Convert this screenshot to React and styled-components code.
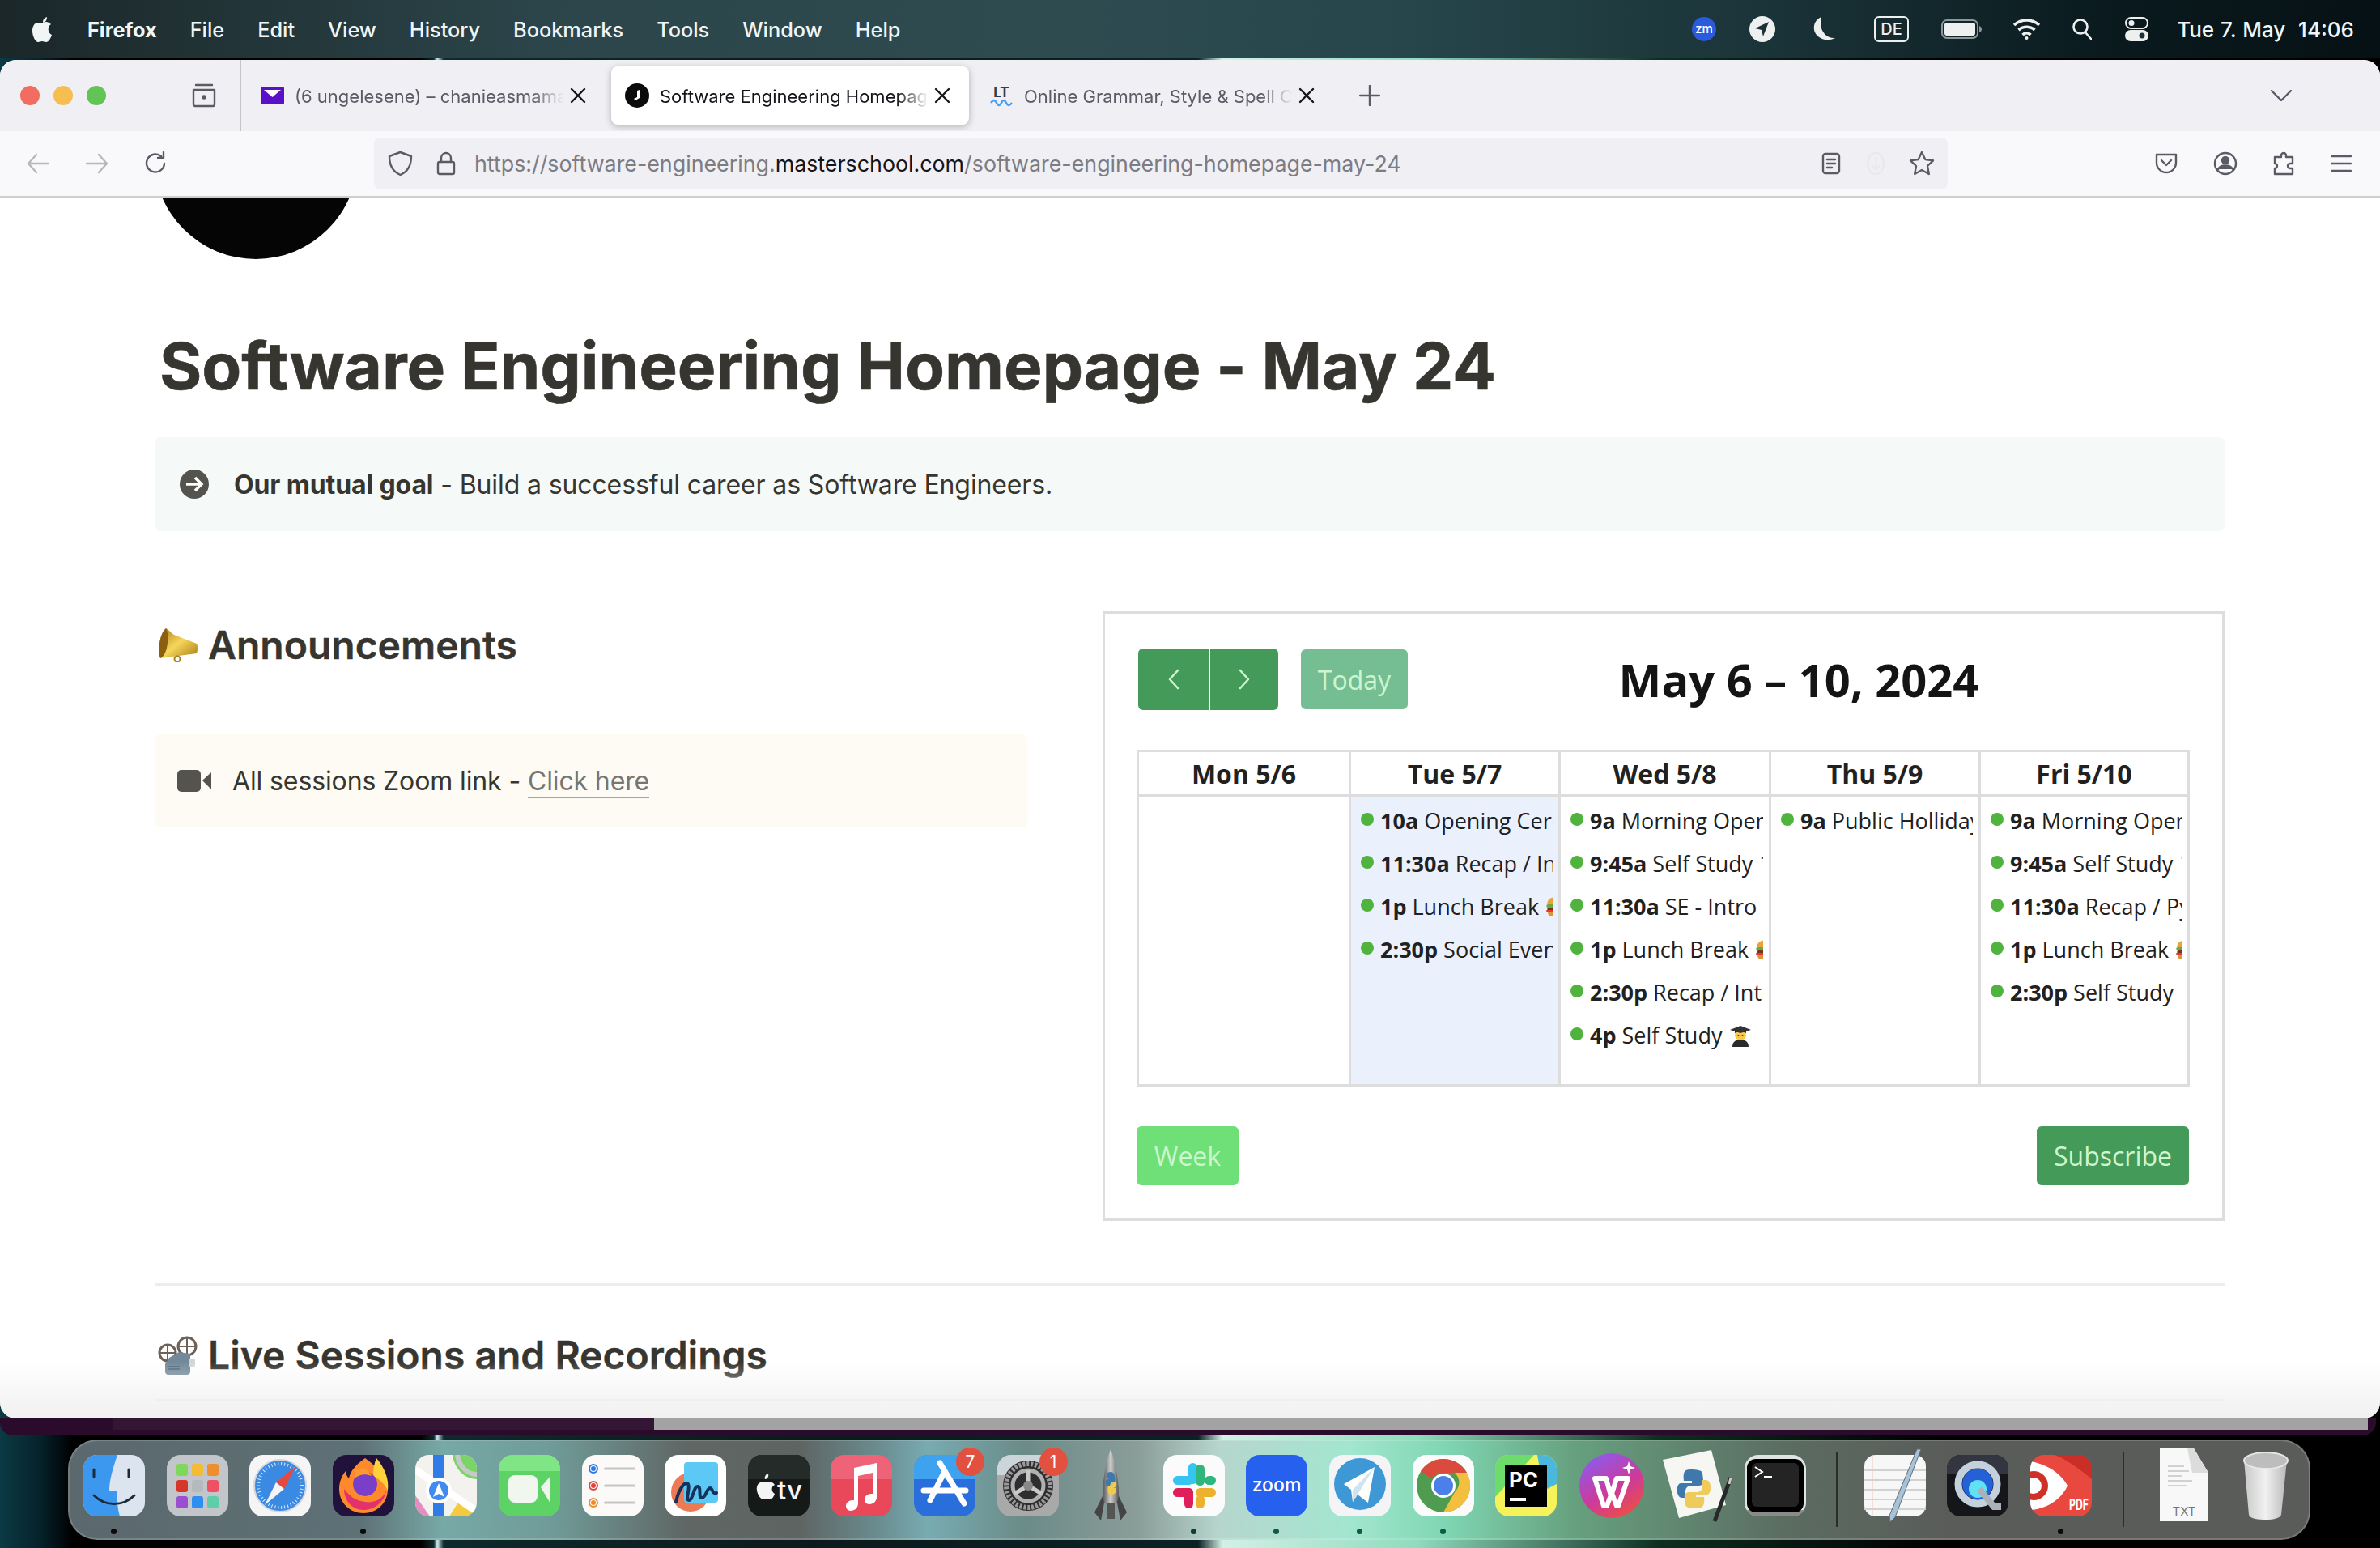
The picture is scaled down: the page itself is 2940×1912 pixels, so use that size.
import React from 'react';
import styled, { createGlobalStyle } from 'styled-components';

const GlobalStyle = createGlobalStyle`
  html, body { margin: 0; padding: 0; background: #000; }
  * { box-sizing: border-box; }
`;

const Desktop = styled.div`
  width: 2940px;
  height: 1912px;
  overflow: hidden;
  display: flex;
  flex-direction: column;
  font-family: Inter, "Liberation Sans", sans-serif;
  background: linear-gradient(90deg, #0b3a44 0, #06222a 50px, #000 90px, #000 520px, #0d2a2c 536px, #cfeef0 540px, #0d2a2c 548px, #0c1a1c 1000px, #0a2226 1480px, #d2f0e6 1510px, #8fdcbe 1750px, #0c2e20 2050px, #000 2400px);
`;

const MenuBar = styled.header`
  height: 72px;
  flex: none;
  display: flex;
  align-items: center;
  padding: 0 32px 0 40px;
  color: #f2f5f5;
  font-size: 25.3px;
  background: linear-gradient(90deg, #1b2729 0, #2c464b 700px, #2e4b50 1300px, #27474c 1700px, #1a3338 2200px, #0a1a1e 2600px, #061115 2940px);
`;

const MenuItem = styled.span`
  margin-left: ${p => p.$ml || 41}px;
  font-weight: ${p => (p.$strong ? 700 : 500)};
  white-space: nowrap;
`;

const StatusGroup = styled.div`
  margin-left: auto;
  display: flex;
  align-items: center;
`;

const StatusIcon = styled.svg`
  flex: none;
  margin-left: ${p => p.$ml}px;
`;

const Clock = styled.span`
  margin-left: 35px;
  font-size: 26px;
  font-weight: 500;
  white-space: pre;
  word-spacing: 1px;
`;

const BrowserWindow = styled.main`
  position: relative;
  margin-top: 2px;
  height: 1678px;
  flex: none;
  display: flex;
  flex-direction: column;
  background: #fff;
  border-radius: 20px;
  overflow: hidden;
  &::after {
    content: '';
    position: absolute;
    left: 0;
    right: 0;
    bottom: 0;
    height: 70px;
    background: linear-gradient(180deg, rgba(240,240,240,0), #f0f0f0);
    pointer-events: none;
  }
`;

const TabBar = styled.div`
  height: 88px;
  flex: none;
  display: flex;
  align-items: center;
  padding-left: 25px;
  background: #f0eff4;
`;

const Lights = styled.div`
  display: flex;
  gap: 17px;
`;

const Light = styled.span`
  width: 24px;
  height: 24px;
  border-radius: 50%;
  background: ${p => p.$color};
`;

const SideDivider = styled.div`
  width: 2px;
  height: 88px;
  margin: 0 7px 0 28px;
  background: #c4c3c9;
`;

const Tab = styled.div`
  width: 442px;
  height: 72px;
  margin-right: 8px;
  padding: 0 22px 0 17px;
  display: flex;
  align-items: center;
  border-radius: 8px;
  font-size: 22px;
  color: ${p => (p.$active ? '#15141a' : '#5b5b66')};
  background: ${p => (p.$active ? '#fff' : 'transparent')};
  box-shadow: ${p => (p.$active ? '0 2px 8px rgba(0,0,0,0.28)' : 'none')};
`;

const TabLabel = styled.span`
  flex: 1;
  min-width: 0;
  margin: 2px 6px 0 13px;
  overflow: hidden;
  white-space: nowrap;
  -webkit-mask-image: linear-gradient(90deg, #000 88%, transparent);
  mask-image: linear-gradient(90deg, #000 88%, transparent);
`;

const Toolbar = styled.div`
  height: 82px;
  flex: none;
  display: flex;
  align-items: center;
  padding: 0 34px 0 33px;
  background: #f9f9fb;
  border-bottom: 2px solid #cfcfd1;
`;

const UrlBar = styled.div`
  width: 1944px;
  height: 64px;
  margin: 0 256px 0 254px;
  padding: 0 16px;
  flex: none;
  display: flex;
  align-items: center;
  border-radius: 8px;
  background: #f0eff3;
`;

const UrlText = styled.span`
  margin-left: 23px;
  font-size: 26.8px;
  color: #7c7c85;
  white-space: nowrap;
  b { font-weight: 400; color: #15141a; }
`;

const ToolIcon = styled.svg`
  flex: none;
  margin-left: ${p => p.$ml || 0}px;
  margin-right: ${p => p.$mr || 0}px;
  fill: none;
  stroke: ${p => p.$color || '#5b5b66'};
  stroke-width: 2.4;
  stroke-linecap: round;
  stroke-linejoin: round;
`;

const ReaderIcon = styled(ToolIcon)`
  margin-left: auto;
`;

const PageScroll = styled.div`
  flex: 1;
  min-height: 0;
  overflow: hidden;
  padding: 0 192px;
  color: #37352f;
`;

const Avatar = styled.div`
  width: 252px;
  height: 252px;
  margin: -176px 0 0 -2px;
  border-radius: 50%;
  background: #050505;
`;

const PageTitle = styled.h1`
  margin: 84px 0 0 5px;
  font-size: 80px;
  line-height: 96px;
  font-weight: 700;
  letter-spacing: -0.05px;
  -webkit-text-stroke: 0.6px #37352f;
`;

const Callout = styled.div`
  height: ${p => p.$h}px;
  display: flex;
  align-items: center;
  gap: ${p => p.$gap}px;
  padding-left: ${p => p.$pad}px;
  border-radius: 6px;
  background: ${p => p.$bg};
  font-size: 32px;
  letter-spacing: -0.12px;
`;

const GoalCallout = styled(Callout)`
  margin-top: 40px;
`;

const ZoomLink = styled.a`
  color: #787671;
  border-bottom: 2px solid #a5a3a0;
  line-height: 38px;
`;

const Columns = styled.section`
  display: grid;
  grid-template-columns: 1077px 1386px;
  column-gap: 93px;
  margin-top: 101px;
`;

const SectionTitle = styled.h2`
  margin: 0;
  display: flex;
  align-items: center;
  gap: 12px;
  font-size: 48px;
  line-height: 58px;
  font-weight: 600;
  padding-left: 3px;
  -webkit-text-stroke: 0.4px #37352f;
`;

const AnnounceTitle = styled(SectionTitle)`
  margin-top: 11px;
`;

const ZoomCallout = styled(Callout)`
  margin-top: 81px;
`;

const CalendarCard = styled.div`
  height: 753px;
  margin-top: -2px;
  padding: 43px 40px 38px 39px;
  border: 3px solid #dddddd;
  font-family: "Open Sans", sans-serif;
  color: #212121;
`;

const CalToolbar = styled.div`
  height: 76px;
  padding-left: 2px;
  display: flex;
  align-items: center;
  justify-content: space-between;
`;

const ToolbarLeft = styled.div`
  display: flex;
  align-items: center;
  gap: 28px;
`;

const NavGroup = styled.div`
  display: flex;
  height: 76px;
  border-radius: 6px;
  overflow: hidden;
`;

const NavButton = styled.div`
  width: ${p => p.$w}px;
  display: flex;
  align-items: center;
  justify-content: center;
  background: #449a58;
  border-left: ${p => (p.$split ? '2px solid #fff' : '0')};
`;

const CalButton = styled.div`
  width: ${p => p.$w}px;
  height: ${p => p.$h}px;
  display: flex;
  align-items: center;
  justify-content: center;
  border-radius: 6px;
  background: ${p => p.$bg};
  color: #cdf6ce;
  font-size: 32px;
`;

const CalTitle = styled.h3`
  margin: 0;
  font-size: 56px;
  line-height: 76px;
  font-weight: 700;
  color: #141414;
`;

const ToolbarSpacer = styled.span`
  width: 0;
`;

const CalGrid = styled.div`
  margin-top: 49px;
  display: grid;
  grid-template-columns: 262px 259px 260px 259px 258px;
  grid-template-rows: 55px 358px;
  border-right: 3px solid #ddd;
  border-bottom: 3px solid #ddd;
`;

const DayHead = styled.div`
  display: flex;
  align-items: center;
  justify-content: center;
  border-left: 3px solid #ddd;
  border-top: 3px solid #ddd;
  font-size: 32px;
  font-weight: 700;
`;

const DayCell = styled.div`
  min-width: 0;
  padding-top: 3px;
  border-left: 3px solid #ddd;
  border-top: 3px solid #ddd;
  background: ${p => (p.$today ? '#eaf1fd' : '#fff')};
`;

const EventRow = styled.div`
  height: 53px;
  padding: 0 7px 0 12px;
  display: flex;
  align-items: center;
`;

const EventDot = styled.span`
  width: 16px;
  height: 16px;
  flex: none;
  margin: 0 8px 3px 0;
  border-radius: 50%;
  background: #4fb33d;
`;

const EventText = styled.span`
  flex: 1;
  min-width: 0;
  overflow: hidden;
  font-size: 27px;
  white-space: nowrap;
  display: flex;
  align-items: center;
  gap: 8px;
  b { font-weight: 700; margin-right: 7px; }
  svg { flex: none; }
`;

const CalFooter = styled.div`
  margin-top: 49px;
  display: flex;
  justify-content: space-between;
  padding-right: 1px;
`;

const Rule = styled.hr`
  margin: ${p => p.$top}px 0 0;
  border: 0;
  height: 3px;
  background: #ededec;
`;

const LiveTitle = styled(SectionTitle)`
  margin-top: 57px;
`;

const BackWindow = styled.div`
  height: 21px;
  flex: none;
  margin-right: 5px;
  padding: 0 10px 0 140px;
  display: flex;
  background: #2b0b2b;
  border-radius: 0 0 16px 16px;
`;

const BackStrip = styled.div`
  width: ${p => p.$w}px;
  height: 14px;
  background: ${p => p.$bg};
`;

const Dock = styled.footer`
  height: 124px;
  width: 2770px;
  flex: none;
  margin: 5px 0 0 84px;
  padding: 17px 0 0 17px;
  display: flex;
  align-items: flex-start;
  border-radius: 36px;
  border: 2px solid rgba(255,255,255,0.18);
  background: linear-gradient(90deg, #5b686d 0, #5e7176 360px, #77a9a6 460px, #6f9a97 600px, #5f6765 760px, #5e6462 900px, #6a8d90 1000px, #78abb1 1060px, #6b8b88 1180px, #8b9d99 1320px, #b6d6cd 1420px, #a3e6d0 1580px, #7fd6b2 1700px, #66a07e 1860px, #5b6c61 2120px, #5a5c5a 2320px, #5a5c5a 2770px);
`;

const DockSlot = styled.div`
  position: relative;
  width: ${p => p.$w || 76}px;
  margin-right: ${p => (p.$mr === undefined ? 26.6 : p.$mr)}px;
  height: 76px;
  flex: none;
  &::after {
    content: ${p => (p.$running ? "''" : 'none')};
    position: absolute;
    left: 34px;
    top: 91px;
    width: 7px;
    height: 7px;
    border-radius: 50%;
    background: ${p => p.$dot || '#0a0a0a'};
  }
`;

const DockSvg = styled.svg`
  position: absolute;
  left: 0;
  top: ${p => p.$top || 0}px;
  overflow: visible;
`;

const Badge = styled.span`
  position: absolute;
  right: -11px;
  top: -9px;
  width: 35px;
  height: 35px;
  display: flex;
  align-items: center;
  justify-content: center;
  border-radius: 50%;
  background: #e2503f;
  color: #fff;
  font-size: 21px;
`;

const DockDivider = styled.span`
  width: 2px;
  height: 92px;
  flex: none;
  margin: -3px ${p => p.$r}px 0 0;
  background: #2a2d2b;
`;

// little drawings that stand in for the colour emoji
const Burger = ({ size = 30 }) => (
  <svg width={size * 0.95} height={size} viewBox="0 0 28 30">
    <path d="M2 12C2 5 8 3 14 3s12 2 12 9z" fill="#e8a33c" />
    <rect x="1" y="12" width="26" height="4" rx="2" fill="#6cab3a" />
    <rect x="2" y="16" width="24" height="4" rx="2" fill="#6b3a1e" />
    <rect x="1" y="19" width="26" height="2" fill="#e33" />
    <path d="M3 21h22v2c0 3-3 4-5 4H8c-2 0-5-1-5-4z" fill="#dd9533" />
  </svg>
);

const Student = ({ size = 30 }) => (
  <svg width={size} height={size} viewBox="0 0 30 30">
    <path d="M5 29c0-6 4-9 10-9s10 3 10 9z" fill="#2b2b2b" />
    <circle cx="15" cy="14" r="7" fill="#f7c94a" />
    <path d="M8 12l7-3 7 3v-2h-14z" fill="#222" />
    <path d="M15 3l13 5-13 4-13-4z" fill="#333" />
    <circle cx="12.5" cy="15" r="1" fill="#333" />
    <circle cx="17.5" cy="15" r="1" fill="#333" />
  </svg>
);

const Megaphone = () => (
  <svg width="50" height="42" viewBox="0 0 50 42">
    <defs>
      <linearGradient id="horn" x1="0" y1="0" x2="1" y2="1">
        <stop offset="0" stopColor="#a87810" />
        <stop offset="0.5" stopColor="#f6d75a" />
        <stop offset="1" stopColor="#a97a14" />
      </linearGradient>
    </defs>
    <path d="M10 0c4 2 6 6 10 8l28 11c2 4 1 9 0 12L3 37C0 30 1 8 10 0z" fill="url(#horn)" />
    <path d="M10 0C1 8 0 30 3 37c5-2 8-10 9-19 1-8 0-15-2-18z" fill="#8a6010" />
    <circle cx="24" cy="38" r="3.500" fill="none" stroke="#a9801c" strokeWidth="2" />
  </svg>
);

const Projector = () => (
  <svg width="50" height="48" viewBox="0 0 50 48">
    <g fill="none" stroke="#6e6258" strokeWidth="3">
      <circle cx="12" cy="21" r="10" />
      <circle cx="36" cy="13" r="11" />
      <path d="M12 11v20M2 21h20M36 2v22M25 13h22" strokeWidth="2" />
    </g>
    <path d="M14 27l12-7 14 2v8l4 2v6l-4 1v5c0 3-2 4-4 4H13c-3 0-4-2-4-4V35z" fill="#72899a" />
    <rect x="38" y="28" width="8" height="10" rx="2" fill="#cfd6da" />
    <path d="M13 38h14M13 41h14" stroke="#4f6270" strokeWidth="1.5" />
  </svg>
);

// dock icons, every one on a 76 wide drawing
const Tile = ({ id, fill, children }) => (
  <DockSvg width="76" height="76" viewBox="0 0 76 76">
    <clipPath id={id}><rect width="76" height="76" rx="17" /></clipPath>
    <g clipPath={`url(#${id})`}>
      <rect width="76" height="76" fill={fill} />
      {children}
    </g>
  </DockSvg>
);

const FinderIcon = () => (
  <Tile id="finder" fill="#dbe4ef">
    <path d="M0 0h42C36 18 32 32 32 44h10c-1 10 0 22 3 32H0z" fill="#3c97ee" />
    <path d="M13 18v9M56 18v9" stroke="#1a2b3c" strokeWidth="3" strokeLinecap="round" />
    <path d="M13 50c14 14 36 14 50 0" fill="none" stroke="#1a2b3c" strokeWidth="3" strokeLinecap="round" />
  </Tile>
);

const LaunchpadIcon = () => {
  const cells = ['#7fd859', '#f4bb35', '#ee8e2d', '#d5372b', '#b5babd', '#ef5063', '#9a4fd0', '#2e8ff0', '#5dcfa8'];
  return (
    <Tile id="launchpad" fill="#c2c6ca">
      {cells.map((c, i) => (
        <rect key={c} x={12 + (i % 3) * 19} y={11 + Math.floor(i / 3) * 20} width="14" height="15" rx="3" fill={c} />
      ))}
    </Tile>
  );
};

const SafariIcon = () => (
  <Tile id="safari" fill="#f5f5f6">
    <circle cx="38" cy="38" r="32" fill="#3a8ae4" stroke="#d4d6da" strokeWidth="2" />
    <circle cx="38" cy="38" r="27" fill="none" stroke="#dfeafa" strokeWidth="4" strokeDasharray="1 3" />
    <path d="M57 14L33 34l10 8z" fill="#e8483d" />
    <path d="M19 62l14-28 10 8z" fill="#f5f5f5" />
  </Tile>
);

const FirefoxIcon = () => (
  <Tile id="firefox" fill="#20123a">
    <path d="M40 4c14 10 28 24 28 38 0 18-14 30-30 30S8 60 8 42c0-8 3-16 8-22 0 4 2 7 4 9 2-10 10-18 20-25z" fill="#ff8a2b" />
    <path d="M54 4c10 12 16 26 14 40-4-8-10-14-18-18 0-8 1-15 4-22z" fill="#ffd23c" />
    <path d="M14 42c0 14 10 26 24 26s26-10 28-24c-4 10-14 16-26 14-12-1-20-8-26-16z" fill="#e3316e" />
    <circle cx="40" cy="36" r="15" fill="#7a3fc8" />
    <path d="M28 18c8-3 16 0 20 8-8-3-14-2-20 2z" fill="#ff9a2e" />
  </Tile>
);

const MapsIcon = () => (
  <Tile id="maps" fill="#f4f2ee">
    <path d="M46 0h30v30C60 30 48 16 46 0z" fill="#7ad468" />
    <path d="M0 50l18 26H0z" fill="#e58dbe" />
    <path d="M42 76l14-22 20 22z" fill="#f4ca3f" />
    <path d="M52 0c2 14 12 24 24 24" fill="none" stroke="#c8c8c8" strokeWidth="6" />
    <rect x="22" y="0" width="14" height="76" fill="#2f7ce8" />
    <path d="M0 18l76 52" stroke="#fff" strokeWidth="9" />
    <circle cx="29" cy="44" r="16" fill="#fff" />
    <circle cx="29" cy="44" r="12" fill="#3f8bf0" />
    <path d="M29 35l7 17-7-4-7 4z" fill="#fff" />
  </Tile>
);

const FaceTimeIcon = () => (
  <Tile id="facetime" fill="#5cd364">
    <rect width="76" height="20" fill="#7fe585" />
    <rect x="12" y="25" width="36" height="34" rx="8" fill="#f1f6ef" />
    <path d="M52 40l12-14v34z" fill="#eef5ec" />
  </Tile>
);

const RemindersIcon = () => (
  <Tile id="reminders" fill="#fbfaf8">
    {[['#2d78e4', 17], ['#e0443a', 38], ['#e98d2b', 59]].map(([c, y]) => (
      <g key={y}>
        <circle cx="14" cy={y} r="5" fill="#fff" stroke={c} strokeWidth="2" />
        <circle cx="14" cy={y} r="3" fill={c} />
        <rect x="27" y={y - 1.5} width="39" height="3" rx="1.5" fill="#c5c5c7" />
      </g>
    ))}
  </Tile>
);

const FreeformIcon = () => (
  <Tile id="freeform" fill="#ffffff">
    <circle cx="32" cy="46" r="24" fill="#ec7a55" />
    <rect x="24" y="9" width="42" height="50" rx="4" fill="#5cc8f5" />
    <path d="M14 58c4-18 12-26 15-22 3 5-4 20 1 20s6-18 11-17 0 14 5 14 6-12 10-12 2 8 8 6" fill="none" stroke="#13325c" strokeWidth="4" strokeLinecap="round" />
  </Tile>
);

const TvIcon = () => (
  <Tile id="tv" fill="#151a19">
    <rect width="76" height="30" fill="#242b29" />
    <path d="M19 33c-6 0-9 5-8 11s5 11 8 11c2 0 2-1 4-1s2 1 4 1c3 0 5-4 6-7-4-2-5-9 0-11-2-3-5-4-7-4-3 0-4 1-5 1s-1-1-2-1zM25 23c-3 1-5 4-4 7 3 0 5-3 4-7z" fill="#f4f4f4" />
    <text x="36" y="55" fontFamily="Inter, sans-serif" fontSize="33" fontWeight="500" fill="#f4f4f4">tv</text>
  </Tile>
);

const MusicIcon = () => (
  <Tile id="music" fill="#e9475a">
    <rect width="76" height="30" fill="#ee6377" />
    <path d="M29 16l28-6v42c0 5-4 9-9 9-4 0-6-3-6-6 0-4 4-7 8-7h2V22l-18 4v34c0 5-4 9-9 9-4 0-6-3-6-6 0-4 4-7 8-7h2z" fill="#fff" />
  </Tile>
);

const AppStoreIcon = () => (
  <Tile id="appstore" fill="#2a6edc">
    <rect width="76" height="30" fill="#3fa2ef" />
    <g stroke="#fff" strokeWidth="7" strokeLinecap="round">
      <path d="M38 20L20 56M32 10l30 50M12 44h52" />
    </g>
  </Tile>
);

const SettingsIcon = () => (
  <Tile id="settings" fill="#a9a9a9">
    <rect width="76" height="25" fill="#ccd5da" />
    <circle cx="38" cy="38" r="31" fill="#2e2e30" />
    <circle cx="38" cy="38" r="27" fill="none" stroke="#9a9a9a" strokeWidth="6" strokeDasharray="3 2" />
    <circle cx="38" cy="38" r="19" fill="none" stroke="#b0b0b0" strokeWidth="5" />
    <path d="M38 38V19M38 38L21 48M38 38l17 10" stroke="#c9c9c9" strokeWidth="5" />
    <circle cx="38" cy="38" r="6" fill="#888" />
  </Tile>
);

const RocketIcon = () => (
  <DockSvg $top={-7} width="76" height="90" viewBox="0 0 76 90">
    <defs>
      <linearGradient id="hull" x1="0" y1="0" x2="1" y2="0">
        <stop offset="0" stopColor="#4f4f50" />
        <stop offset="0.5" stopColor="#cfcfd0" />
        <stop offset="1" stopColor="#555" />
      </linearGradient>
    </defs>
    <path d="M38 0c6 16 11 42 10 66H28C27 42 32 16 38 0z" fill="url(#hull)" />
    <path d="M28 58l-10 20 8 10 4-22zM48 58l10 20-8 10-4-22z" fill="#444" />
    <rect x="33" y="66" width="10" height="20" fill="#555" />
    <path d="M38 28c-5 0-6 3-5 8h5c-5 0-7 2-6 7 0 3 3 3 5 2 1-4 3-5 6-5 1-5 0-12-5-12z" fill="#3e78ad" />
    <path d="M39 56c5 0 6-3 5-8h-5c5 0 7-2 6-7l-4 0c-1 4-3 5-6 5-1 5-1 10 4 10z" fill="#efcb4b" />
  </DockSvg>
);

const SlackIcon = () => (
  <Tile id="slack" fill="#fbfbfb">
    <rect x="31" y="10" width="11" height="26" rx="5.5" fill="#36c5f0" />
    <rect x="12" y="26" width="25" height="11" rx="5.5" fill="#36c5f0" />
    <rect x="40" y="12" width="11" height="26" rx="5.5" fill="#2eb67d" />
    <rect x="51" y="26" width="14" height="11" rx="5.5" fill="#2eb67d" />
    <rect x="40" y="41" width="25" height="11" rx="5.5" fill="#ecb22e" />
    <rect x="40" y="50" width="11" height="16" rx="5.5" fill="#ecb22e" />
    <rect x="12" y="41" width="25" height="11" rx="5.5" fill="#e01e5a" />
    <rect x="26" y="41" width="11" height="25" rx="5.5" fill="#e01e5a" />
  </Tile>
);

const ZoomIcon = () => (
  <Tile id="zoom" fill="#2560ee">
    <text x="38" y="45" textAnchor="middle" fontFamily="Inter, sans-serif" fontSize="23" fontWeight="500" fill="#fff">zoom</text>
  </Tile>
);

const TelegramIcon = () => (
  <Tile id="telegram" fill="#f4f4f6">
    <circle cx="38" cy="36" r="32" fill="#3f98d6" />
    <path d="M18 36l38-21-8 44-13-10-6 9-2-15z" fill="#fff" />
    <path d="M29 43l27-28-21 34-6 9z" fill="#cfe3f1" />
  </Tile>
);

const ChromeIcon = () => (
  <Tile id="chrome" fill="#fbfbfb">
    <circle cx="38" cy="38" r="33" fill="#4f9c50" />
    <path d="M38 5a33 33 0 0 1 29 17H38a16 16 0 0 0-14 8L10 20A33 33 0 0 1 38 5z" fill="#db4b3d" />
    <path d="M67 22a33 33 0 0 1-29 49l14-25a16 16 0 0 0 0-24z" fill="#f3bf3f" />
    <circle cx="38" cy="38" r="15" fill="#fff" />
    <circle cx="38" cy="38" r="12" fill="#4a80e8" />
  </Tile>
);

const PyCharmIcon = () => (
  <Tile id="pycharm" fill="#f6f25a">
    <path d="M0 0h48L0 52z" fill="#6edc6a" />
    <path d="M52 0h24v36L60 44z" fill="#49b8dc" />
    <rect x="12" y="12" width="52" height="52" fill="#000" />
    <text x="17" y="40" fontFamily="Inter, sans-serif" fontSize="26" fontWeight="700" fill="#fff">PC</text>
    <rect x="18" y="53" width="20" height="4" fill="#fff" />
  </Tile>
);

const WondershareIcon = () => (
  <DockSvg $top={-3} width="82" height="82" viewBox="0 0 82 82">
    <defs>
      <linearGradient id="ws" x1="0.2" y1="0" x2="0.8" y2="1">
        <stop offset="0" stopColor="#8a5cf0" />
        <stop offset="0.55" stopColor="#cc3a9c" />
        <stop offset="1" stopColor="#f0503c" />
      </linearGradient>
    </defs>
    <circle cx="41" cy="41" r="40" fill="url(#ws)" />
    <path d="M20 32h14l6 22 7-22h14l-12 34H47l-6-16-6 16h-4z" fill="none" stroke="#fff" strokeWidth="6" strokeLinejoin="round" />
    <path d="M62 11l2 6 6 2-6 2-2 6-2-6-6-2 6-2z" fill="#fff" />
  </DockSvg>
);

const PythonIcon = () => (
  <DockSvg $top={-6} width="90" height="90" viewBox="0 0 90 90">
    <path d="M2 12L62 0l18 68-58 16z" fill="#f6f6f2" />
    <path d="M36 24c-8 0-9 4-8 14h10v3H24c-6 1-6 18 2 18h4v-8c0-4 3-7 7-7h10c3 0 6-3 5-7l-1-9c-1-3-7-4-15-4z" fill="#3e78ad" />
    <path d="M44 72c8 0 10-4 9-14H43v-3h14c6-1 6-18-2-18h-4v8c0 4-3 7-7 7H34c-3 0-6 3-5 7l1 9c1 3 6 4 14 4z" fill="#eecb5a" />
    <path d="M86 34L66 88" stroke="#28282a" strokeWidth="5" />
    <path d="M86 34l-2 8" stroke="#ccc" strokeWidth="3" />
  </DockSvg>
);

const TerminalIcon = () => (
  <Tile id="terminal" fill="#dfe3e4">
    <rect y="68" width="76" height="8" fill="#8a8a8a" />
    <rect x="3" y="5" width="70" height="66" rx="11" fill="#000" />
    <rect x="9" y="10" width="58" height="54" rx="6" fill="#242424" />
    <path d="M13 15l9 6-9 6" fill="none" stroke="#fff" strokeWidth="2" />
    <rect x="24" y="26" width="10" height="3" fill="#fff" />
  </Tile>
);

const TextEditIcon = () => (
  <DockSvg $top={-7} width="76" height="90" viewBox="0 0 76 90">
    <rect y="7" width="76" height="76" rx="14" fill="#f7f7f7" />
    <path d="M0 26h76M0 38h76M0 50h76M0 62h76M0 74h76" stroke="#d2d2d2" strokeWidth="2" />
    <path d="M10 7v76" stroke="#eec7c0" />
    <path d="M70 0l-5 0-34 82 1 8 6-6z" fill="#a9c2d6" stroke="#5e6d78" />
  </DockSvg>
);

const QuickTimeIcon = () => (
  <Tile id="quicktime" fill="#15161a">
    <rect width="76" height="24" fill="#333640" />
    <circle cx="38" cy="36" r="24" fill="none" stroke="#c4d0dc" strokeWidth="9" />
    <circle cx="38" cy="36" r="19" fill="#2460d8" />
    <circle cx="38" cy="42" r="11" fill="#5ee2f4" />
    <path d="M40 42l18 22h9" fill="none" stroke="#a9b2bb" strokeWidth="8" />
  </Tile>
);

const PdfIcon = () => (
  <Tile id="pdf" fill="#e8483e">
    <path d="M30 0h46v30C66 22 50 8 30 0z" fill="#c92f26" />
    <path d="M0 8c24 4 40 18 46 30-6 14-22 28-46 30z" fill="#fff" />
    <circle cx="4" cy="38" r="18" fill="#cf3028" />
    <circle cx="4" cy="38" r="10" fill="#fff" />
    <text x="72" y="68" textAnchor="end" fontFamily="Inter, sans-serif" fontSize="19" fontWeight="700" fill="#fff" textLength="24" lengthAdjust="spacingAndGlyphs">PDF</text>
  </Tile>
);

const TxtIcon = () => (
  <DockSvg $top={-8} width="76" height="92" viewBox="0 0 76 92">
    <path d="M4 0h42l18 30v60H4z" fill="#f8f8f8" />
    <path d="M38 0h8l18 30H44z" fill="#dcdcdc" />
    <path d="M14 22h20M14 28h26M14 34h18M14 40h30M14 46h24" stroke="#aaa" strokeWidth="1" />
    <text x="34" y="83" textAnchor="middle" fontFamily="Inter, sans-serif" fontSize="15" fill="#777">TXT</text>
  </DockSvg>
);

const TrashIcon = () => (
  <DockSvg $top={-4} width="76" height="84" viewBox="0 0 76 84">
    <defs>
      <linearGradient id="bin" x1="0" y1="0" x2="1" y2="0">
        <stop offset="0" stopColor="#c9c9c9" />
        <stop offset="0.5" stopColor="#f1f1f1" />
        <stop offset="1" stopColor="#b9b9b9" />
      </linearGradient>
    </defs>
    <path d="M5 10l6 68c1 4 8 6 20 6s18-2 20-6l7-68z" fill="url(#bin)" />
    <ellipse cx="32" cy="11" rx="27" ry="10" fill="#bdbdbd" stroke="#e6e6e6" strokeWidth="2" />
  </DockSvg>
);

const DOCK = [
  { Icon: FinderIcon, running: true },
  { Icon: LaunchpadIcon },
  { Icon: SafariIcon },
  { Icon: FirefoxIcon, running: true },
  { Icon: MapsIcon },
  { Icon: FaceTimeIcon },
  { Icon: RemindersIcon },
  { Icon: FreeformIcon },
  { Icon: TvIcon },
  { Icon: MusicIcon },
  { Icon: AppStoreIcon, badge: '7' },
  { Icon: SettingsIcon, badge: '1' },
  { Icon: RocketIcon },
  { Icon: SlackIcon, running: true, dot: '#0d3f33' },
  { Icon: ZoomIcon, running: true, dot: '#0d5a45' },
  { Icon: TelegramIcon, running: true, dot: '#0d5a45' },
  { Icon: ChromeIcon, running: true, dot: '#0d5a45' },
  { Icon: PyCharmIcon },
  { Icon: WondershareIcon },
  { Icon: PythonIcon },
  { Icon: TerminalIcon, mr: 37 },
  'divider',
  { Icon: TextEditIcon },
  { Icon: QuickTimeIcon },
  { Icon: PdfIcon, running: true, mr: 38 },
  'divider2',
  { Icon: TxtIcon },
  { Icon: TrashIcon, mr: 0 },
];

const STUDY = 'study';
const LUNCH = 'lunch';

const DAYS = [
  { head: 'Mon 5/6', events: [] },
  {
    head: 'Tue 5/7',
    today: true,
    events: [
      ['10a', 'Opening Ceremony'],
      ['11:30a', 'Recap / Intro'],
      ['1p', 'Lunch Break', LUNCH],
      ['2:30p', 'Social Event'],
    ],
  },
  {
    head: 'Wed 5/8',
    events: [
      ['9a', 'Morning Opening'],
      ['9:45a', 'Self Study', STUDY],
      ['11:30a', 'SE - Intro'],
      ['1p', 'Lunch Break', LUNCH],
      ['2:30p', 'Recap / Intro'],
      ['4p', 'Self Study', STUDY],
    ],
  },
  { head: 'Thu 5/9', events: [['9a', 'Public Holliday']] },
  {
    head: 'Fri 5/10',
    events: [
      ['9a', 'Morning Opening'],
      ['9:45a', 'Self Study', STUDY],
      ['11:30a', 'Recap / Python'],
      ['1p', 'Lunch Break', LUNCH],
      ['2:30p', 'Self Study', STUDY],
    ],
  },
];

const MENUS = ['File', 'Edit', 'View', 'History', 'Bookmarks', 'Tools', 'Window', 'Help'];

const Chevron = ({ flip }) => (
  <svg width="18" height="28" viewBox="0 0 18 28" fill="none" stroke="#cdf6ce" strokeWidth="2.6" strokeLinecap="round" strokeLinejoin="round">
    <path d={flip ? 'M4 3l10 11L4 25' : 'M14 3L4 14l10 11'} />
  </svg>
);

const CloseX = () => (
  <ToolIcon width="22" height="22" viewBox="0 0 22 22" $color="#15141a">
    <path d="M3 3l16 16M19 3L3 19" />
  </ToolIcon>
);

export default function App() {
  return (
    <Desktop>
      <GlobalStyle />
      <MenuBar>
        <svg width="26" height="32" viewBox="0 0 26 32" fill="#f2f5f5">
          <path d="M18 1c-3 1-5 3-5 7 3 0 5-3 5-7zM13 9c-2 0-3-1-6-1-4 0-7 4-7 10 0 7 4 14 7 14 2 0 3-1 5-1s3 1 5 1c3 0 6-5 7-9-5-2-6-10-1-13-2-2-4-3-6-3-2 0-3 2-4 2z" />
        </svg>
        <MenuItem $strong $ml={42}>Firefox</MenuItem>
        {MENUS.map(m => <MenuItem key={m}>{m}</MenuItem>)}
        <StatusGroup>
          <StatusIcon $ml={0} width="30" height="32" viewBox="0 0 30 32">
            <circle cx="15" cy="16" r="15" fill="#2a5bdc" />
            <text x="15" y="21" textAnchor="middle" fontFamily="Inter, sans-serif" fontSize="15" fontWeight="500" fill="#fff">zm</text>
          </StatusIcon>
          <StatusIcon $ml={41} width="32" height="32" viewBox="0 0 32 32">
            <circle cx="16" cy="16" r="16" fill="#eef0f0" />
            <path d="M24 7L7 15l8 2 2 8z" fill="#1d3135" />
          </StatusIcon>
          <StatusIcon $ml={46} width="30" height="32" viewBox="0 0 30 32">
            <path d="M11 1C4 4 1 10 2 17c2 9 13 16 26 10C17 28 7 18 11 1z" fill="#eef0f0" />
          </StatusIcon>
          <StatusIcon $ml={46} width="43" height="32" viewBox="0 0 43 32">
            <rect x="1" y="1" width="41" height="30" rx="5" fill="none" stroke="#eef0f0" strokeWidth="2" />
            <text x="21.5" y="23" textAnchor="middle" fontFamily="Inter, sans-serif" fontSize="20" fontWeight="500" fill="#eef0f0">DE</text>
          </StatusIcon>
          <StatusIcon $ml={40} width="50" height="24" viewBox="0 0 50 24">
            <rect x="1" y="1" width="44" height="22" rx="6" fill="none" stroke="#8c979a" strokeWidth="2" />
            <rect x="4" y="4" width="38" height="16" rx="3" fill="#eef0f0" />
            <path d="M47 8c2 1 3 2 3 4s-1 3-3 4z" fill="#8c979a" />
          </StatusIcon>
          <StatusIcon $ml={38} width="35" height="28" viewBox="0 0 35 28" fill="none" stroke="#eef0f0" strokeWidth="3.6">
            <path d="M2 9c9-8 22-8 31 0M7.500 15c6-5 14-5 20 0M12.500 21c3-3 7-3 10 0" />
            <circle cx="17.5" cy="25" r="2" fill="#eef0f0" stroke="none" />
          </StatusIcon>
          <StatusIcon $ml={39} width="24" height="28" viewBox="0 0 24 28" fill="none" stroke="#eef0f0" strokeWidth="2.6" strokeLinecap="round">
            <circle cx="10" cy="11" r="8.5" />
            <path d="M16 18l7 8" />
          </StatusIcon>
          <StatusIcon $ml={41} width="29" height="30" viewBox="0 0 29 30">
            <rect x="1" y="1" width="27" height="13" rx="6.5" fill="none" stroke="#eef0f0" strokeWidth="2" />
            <circle cx="8" cy="7.5" r="3.5" fill="#eef0f0" />
            <rect y="16" width="29" height="14" rx="7" fill="#eef0f0" />
            <circle cx="21" cy="23" r="3.5" fill="#1d3135" />
          </StatusIcon>
          <Clock>{'Tue 7. May  14:06'}</Clock>
        </StatusGroup>
      </MenuBar>

      <BrowserWindow>
        <TabBar>
          <Lights>
            <Light $color="#f26d60" />
            <Light $color="#f6be4f" />
            <Light $color="#61c454" />
          </Lights>
          <ToolIcon $ml={105} width="32" height="30" viewBox="0 0 32 30">
            <path d="M6 2h20M3 8h26v18a2 2 0 0 1-2 2H5a2 2 0 0 1-2-2z" />
            <circle cx="16" cy="17" r="1.6" fill="#5b5b66" />
          </ToolIcon>
          <SideDivider />
          <Tab>
            <svg width="29" height="22" viewBox="0 0 29 22">
              <rect width="29" height="22" rx="2" fill="#5a10c9" />
              <path d="M4 4h21L14.500 13z" fill="#fff" />
            </svg>
            <TabLabel>(6 ungelesene) – chanieasmamaw@gmail.com</TabLabel>
            <CloseX />
          </Tab>
          <Tab $active>
            <svg width="30" height="30" viewBox="0 0 30 30">
              <circle cx="15" cy="15" r="15" fill="#0b0b0b" />
              <path d="M18 8v10l-5 3-2-2 4-2V9z" fill="#fff" />
            </svg>
            <TabLabel>Software Engineering Homepage - May 24</TabLabel>
            <CloseX />
          </Tab>
          <Tab>
            <svg width="30" height="28" viewBox="0 0 30 28">
              <text x="15" y="16" textAnchor="middle" fontFamily="Inter, sans-serif" fontSize="17" fontWeight="700" fill="#2c3e50">LT</text>
              <path d="M2 23c3-4 5-4 7 0s4 4 6 0 4-4 6 0 4 4 7 0" fill="none" stroke="#45a1f8" strokeWidth="2.4" />
            </svg>
            <TabLabel>Online Grammar, Style &amp; Spell Checker</TabLabel>
            <CloseX />
          </Tab>
          <ToolIcon $ml={24} width="26" height="26" viewBox="0 0 26 26">
            <path d="M13 1v24M1 13h24" />
          </ToolIcon>
          <ToolIcon $ml={1100} width="26" height="14" viewBox="0 0 26 14">
            <path d="M1 1l12 12L25 1" />
          </ToolIcon>
        </TabBar>

        <Toolbar>
          <ToolIcon width="28" height="26" viewBox="0 0 28 26" $color="#b7b7bc">
            <path d="M27 13H2M12 2L2 13l10 11" />
          </ToolIcon>
          <ToolIcon $ml={45} width="28" height="26" viewBox="0 0 28 26" $color="#b7b7bc">
            <path d="M1 13h25M16 2l10 11-10 11" />
          </ToolIcon>
          <ToolIcon $ml={44} width="30" height="30" viewBox="0 0 30 30">
            <path d="M25 15a11 11 0 1 1-4-9M24 1v7h-7" />
          </ToolIcon>
          <UrlBar>
            <ToolIcon width="33" height="32" viewBox="0 0 33 32">
              <path d="M16.500 2L30 7c0 12-4 19-13.500 23C7 26 3 19 3 7z" />
            </ToolIcon>
            <ToolIcon $ml={28} width="24" height="30" viewBox="0 0 24 30">
              <rect x="2" y="13" width="20" height="15" rx="2" />
              <path d="M6 13V8a6 6 0 0 1 12 0v5" />
            </ToolIcon>
            <UrlText>
              https://software-engineering.<b>masterschool.com</b>/software-engineering-homepage-may-24
            </UrlText>
            <ReaderIcon width="24" height="28" viewBox="0 0 24 28">
              <rect x="2" y="2" width="20" height="24" rx="3" />
              <path d="M7 9h10M7 14h10M7 19h6" />
            </ReaderIcon>
            <ToolIcon $ml={30} width="26" height="30" viewBox="0 0 26 30" $color="#e9e9ed">
              <path d="M13 2c6 0 10 6 10 13s-4 13-10 13S3 22 3 15 7 2 13 2zM13 8v14M9 18l4 4 4-4" />
            </ToolIcon>
            <ToolIcon $ml={28} width="32" height="32" viewBox="0 0 32 32">
              <path d="M16 2l4.300 9 9.700 1.300-7 6.700 1.800 10L16 24l-8.800 5L9 19l-7-6.700L11.700 11z" />
            </ToolIcon>
          </UrlBar>
          <ToolIcon width="28" height="26" viewBox="0 0 28 26">
            <path d="M2 2h24v10a12 12 0 0 1-24 0zM8 9l6 6 6-6" />
          </ToolIcon>
          <ToolIcon $ml={44} width="30" height="30" viewBox="0 0 30 30">
            <circle cx="15" cy="15" r="13" />
            <circle cx="15" cy="11" r="4" fill="#5b5b66" />
            <path d="M6 22c3-6 15-6 18 0" fill="#5b5b66" />
          </ToolIcon>
          <ToolIcon $ml={43} width="28" height="30" viewBox="0 0 28 30">
            <path d="M11 7V5a3 3 0 0 1 6 0v2h8v8h-3a3 3 0 0 0 0 6h3v7H3v-7h0a3 3 0 0 0 0-6H3V7z" />
          </ToolIcon>
          <ToolIcon $ml={44} width="26" height="22" viewBox="0 0 26 22">
            <path d="M1 2h24M1 11h24M1 20h24" />
          </ToolIcon>
        </Toolbar>

        <PageScroll>
          <Avatar />
          <PageTitle>Software Engineering Homepage - May 24</PageTitle>
          <GoalCallout $h={116} $gap={31} $pad={30} $bg="#f5f9f8">
            <svg width="36" height="36" viewBox="0 0 36 36">
              <circle cx="18" cy="18" r="18" fill="#55534e" />
              <path d="M8 18h19M19 10l8 8-8 8" fill="none" stroke="#fff" strokeWidth="3.5" />
            </svg>
            <span><strong>Our mutual goal</strong> - Build a successful career as Software Engineers.</span>
          </GoalCallout>
          <Columns>
            <div>
              <AnnounceTitle><Megaphone />Announcements</AnnounceTitle>
              <ZoomCallout $h={115} $gap={26} $pad={27} $bg="#fefbf4">
                <svg width="42" height="27" viewBox="0 0 42 27">
                  <rect width="29" height="27" rx="5" fill="#55534e" />
                  <path d="M31 13L42 3v21z" fill="#55534e" />
                </svg>
                <span>All sessions Zoom link - <ZoomLink>Click here</ZoomLink></span>
              </ZoomCallout>
            </div>
            <CalendarCard>
              <CalToolbar>
                <ToolbarLeft>
                  <NavGroup>
                    <NavButton $w={87}><Chevron /></NavButton>
                    <NavButton $w={86} $split><Chevron flip /></NavButton>
                  </NavGroup>
                  <CalButton $w={132} $h={74} $bg="#75bd93">Today</CalButton>
                </ToolbarLeft>
                <CalTitle>May 6 – 10, 2024</CalTitle>
                <ToolbarSpacer />
              </CalToolbar>
              <CalGrid>
                {DAYS.map(d => <DayHead key={d.head}>{d.head}</DayHead>)}
                {DAYS.map(d => (
                  <DayCell key={d.head} $today={d.today}>
                    {d.events.map(([time, title, emoji]) => (
                      <EventRow key={time + title}>
                        <EventDot />
                        <EventText>
                          <span><b>{time}</b>{title}</span>
                          {emoji === LUNCH && <Burger />}
                          {emoji === STUDY && <Student />}
                        </EventText>
                      </EventRow>
                    ))}
                  </DayCell>
                ))}
              </CalGrid>
              <CalFooter>
                <CalButton $w={126} $h={73} $bg="#6fe077">Week</CalButton>
                <CalButton $w={188} $h={73} $bg="#449a58">Subscribe</CalButton>
              </CalFooter>
            </CalendarCard>
          </Columns>
          <Rule $top={77} />
          <LiveTitle><Projector />Live Sessions and Recordings</LiveTitle>
          <Rule $top={25} />
        </PageScroll>
      </BrowserWindow>

      <BackWindow>
        <BackStrip $w={668} $bg="#321634" />
        <BackStrip $w={2117} $bg="#a3a3a3" />
      </BackWindow>

      <Dock>
        {DOCK.map((item, i) => {
          if (item === 'divider') return <DockDivider key={i} $r={33} />;
          if (item === 'divider2') return <DockDivider key={i} $r={40} />;
          const { Icon, running, dot, badge, mr } = item;
          return (
            <DockSlot key={i} $running={running} $dot={dot} $mr={mr}>
              <Icon />
              {badge && <Badge>{badge}</Badge>}
            </DockSlot>
          );
        })}
      </Dock>
    </Desktop>
  );
}
